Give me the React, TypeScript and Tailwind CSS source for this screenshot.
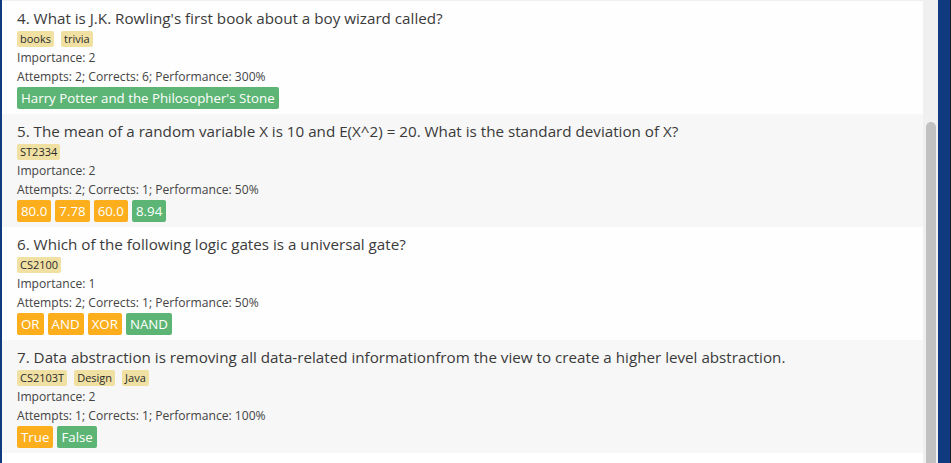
import React from "react";

type Ans = { text: string; ok: boolean };
type Q = {
  title: string;
  tags: string[];
  importance: number;
  stats: string;
  answers: Ans[];
  shade: boolean;
};

const questions: Q[] = [
  {
    title: "4. What is J.K. Rowling's first book about a boy wizard called?",
    tags: ["books", "trivia"],
    importance: 2,
    stats: "Attempts: 2; Corrects: 6; Performance: 300%",
    answers: [{ text: "Harry Potter and the Philosopher's Stone", ok: true }],
    shade: false,
  },
  {
    title:
      "5. The mean of a random variable X is 10 and E(X^2) = 20. What is the standard deviation of X?",
    tags: ["ST2334"],
    importance: 2,
    stats: "Attempts: 2; Corrects: 1; Performance: 50%",
    answers: [
      { text: "80.0", ok: false },
      { text: "7.78", ok: false },
      { text: "60.0", ok: false },
      { text: "8.94", ok: true },
    ],
    shade: true,
  },
  {
    title: "6. Which of the following logic gates is a universal gate?",
    tags: ["CS2100"],
    importance: 1,
    stats: "Attempts: 2; Corrects: 1; Performance: 50%",
    answers: [
      { text: "OR", ok: false },
      { text: "AND", ok: false },
      { text: "XOR", ok: false },
      { text: "NAND", ok: true },
    ],
    shade: false,
  },
  {
    title:
      "7. Data abstraction is removing all data-related informationfrom the view to create a higher level abstraction.",
    tags: ["CS2103T", "Design", "Java"],
    importance: 2,
    stats: "Attempts: 1; Corrects: 1; Performance: 100%",
    answers: [
      { text: "True", ok: false },
      { text: "False", ok: true },
    ],
    shade: true,
  },
];

function Card({ q }: { q: Q }) {
  return (
    <div
      className={`flex h-[113px] flex-col pl-[15px] pt-[7px] pb-[5px] ${
        q.shade ? "bg-[#f7f7f7]" : "bg-[#fefefe]"
      }`}
    >
      <div className="h-[20px] whitespace-nowrap text-[15.2px] leading-[20px] text-[#3a3a3a]">
        {q.title}
      </div>
      <div className="mt-[3px] flex h-[16px] gap-[7px]">
        {q.tags.map((t) => (
          <span
            key={t}
            className="flex h-[16px] items-center rounded-[2px] bg-[#f0e1a3] px-[3px] text-[11px] leading-[16px] text-[#2b2b2b]"
          >
            {t}
          </span>
        ))}
      </div>
      <div className="mt-[1px] h-[19px] text-[12.1px] leading-[19px] text-[#444444]">
        Importance: {q.importance}
      </div>
      <div className="h-[19px] text-[12.1px] leading-[19px] text-[#444444]">
        {q.stats}
      </div>
      <div className="mt-[1px] flex h-[22px] gap-[4px]">
        {q.answers.map((a) => (
          <span
            key={a.text}
            className={`flex h-[22px] items-center rounded-[2px] px-[4px] text-[13.3px] leading-[22px] text-white ${
              a.ok ? "bg-[#5cb574]" : "bg-[#fdae1c]"
            }`}
          >
            {a.text}
          </span>
        ))}
      </div>
    </div>
  );
}

export default function App() {
  return (
    <div
      className="flex h-[463px] w-[951px] overflow-hidden bg-white"
      style={{ fontFamily: '"Open Sans", "Noto Sans", sans-serif' }}
    >
      <div className="w-[2px] shrink-0 bg-[#0f3a80]" />
      <div className="flex min-w-0 flex-1 flex-col bg-white">
        <div className="h-[1px] shrink-0 bg-[#efefef]" />
        {questions.map((q, i) => (
          <Card key={i} q={q} />
        ))}
      </div>
      <div className="flex w-[15px] shrink-0 flex-col items-center bg-[#f0f0f0] pt-[122px]">
        <div className="w-[10px] flex-1 rounded-t-[5px] bg-[#c1c1c1]" />
      </div>
      <div className="w-[12px] shrink-0 bg-[#0f3a80]" />
      <div className="w-[1px] shrink-0 bg-[#1a1a2a]" />
    </div>
  );
}
